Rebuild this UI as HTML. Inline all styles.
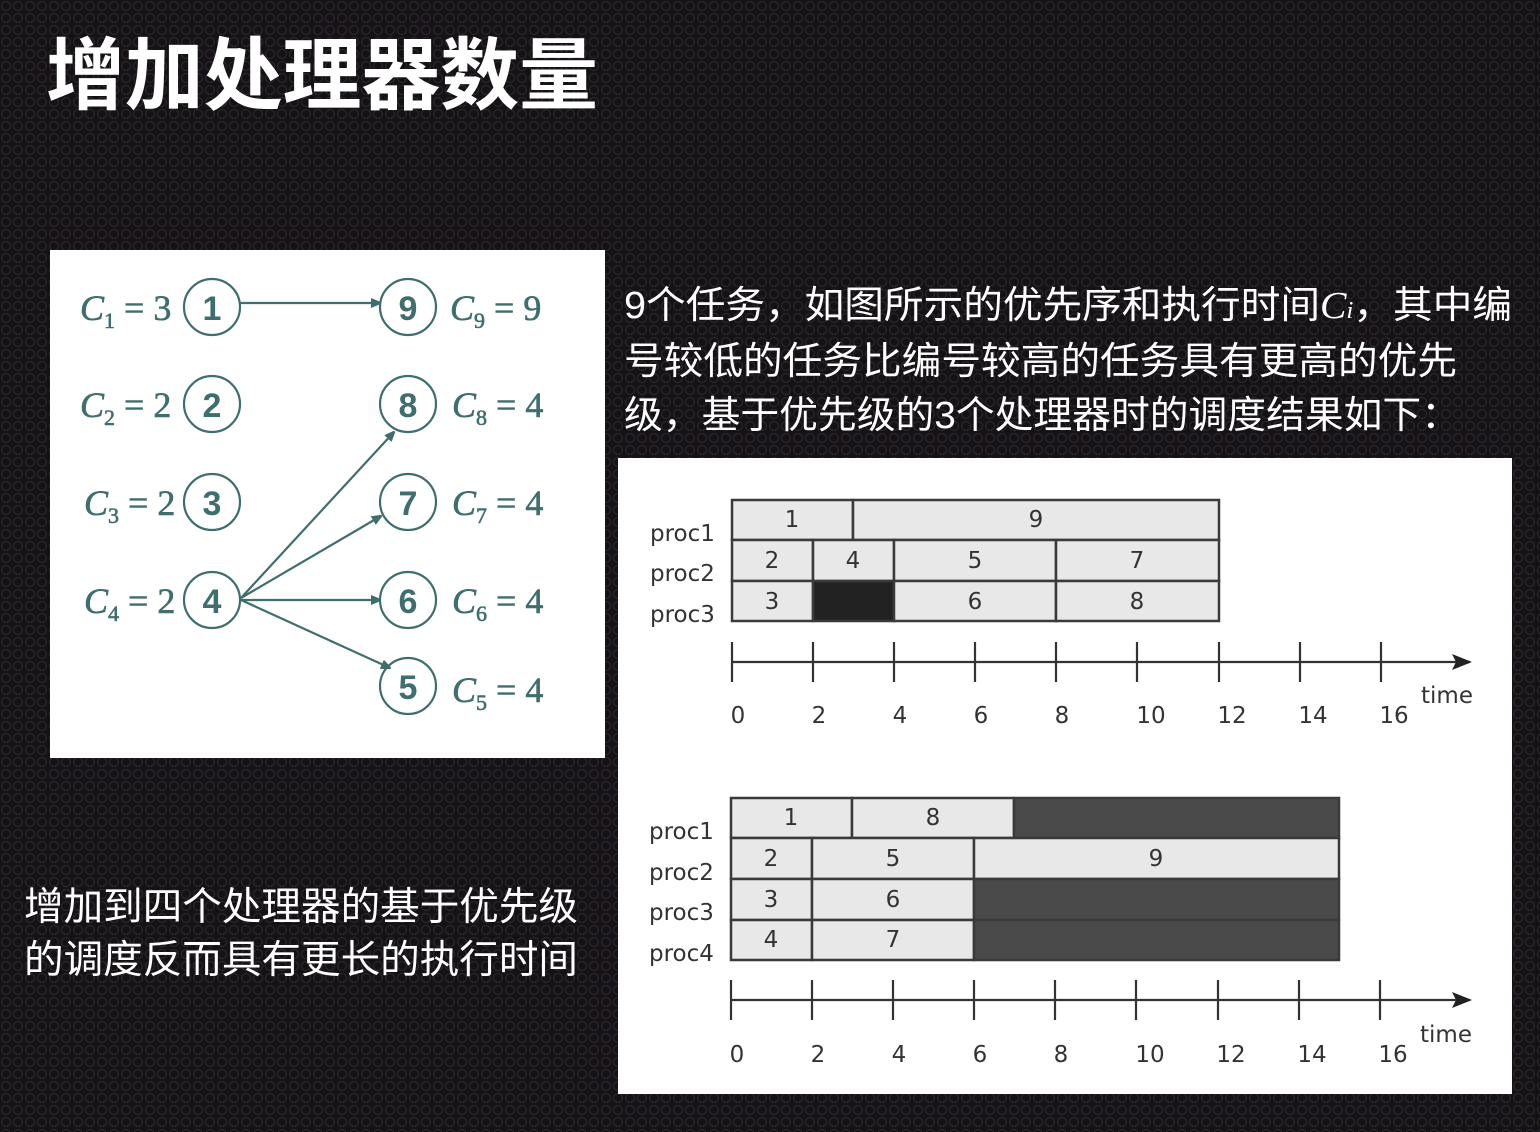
<!DOCTYPE html>
<html><head><meta charset="utf-8"><style>
html,body{margin:0;padding:0;background:#161214;}
svg{display:block}
</style></head><body>
<svg width="1540" height="1132" viewBox="0 0 1540 1132" xmlns="http://www.w3.org/2000/svg">
<defs>
<pattern id="p" width="12" height="12" patternUnits="userSpaceOnUse">
<rect width="12" height="12" fill="#161214"/>
<circle cx="6" cy="6" r="4.5" fill="none" stroke="#262630" stroke-width="1.3"/>
</pattern>
<marker id="ar" markerWidth="10" markerHeight="10" refX="9" refY="5" orient="auto" markerUnits="userSpaceOnUse"><path d="M0,0 L12,5 L0,10 Z" fill="#3f6e6e"/></marker>
<marker id="ak" markerWidth="20" markerHeight="16" refX="18" refY="8" orient="auto" markerUnits="userSpaceOnUse"><path d="M0,0 L20,8 L0,16 L4,8 Z" fill="#222"/></marker>
</defs>
<rect width="1540" height="1132" fill="url(#p)"/>
<g font-family="'Liberation Sans','Noto Sans CJK SC',sans-serif" fill="#fff">
<text x="46" y="103" font-size="79" font-weight="bold" textLength="552" lengthAdjust="spacingAndGlyphs">增加处理器数量</text>
<text font-size="38" x="624" y="318" textLength="888" lengthAdjust="spacingAndGlyphs">9个任务，如图所示的优先序和执行时间<tspan font-family="'Liberation Serif',serif" font-style="italic">C<tspan font-size="24">i</tspan></tspan>，其中编</text>
<text font-size="38" x="624" y="374" textLength="833" lengthAdjust="spacingAndGlyphs">号较低的任务比编号较高的任务具有更高的优先</text>
<text font-size="38" x="624" y="428" textLength="836" lengthAdjust="spacingAndGlyphs">级，基于优先级的3个处理器时的调度结果如下：</text>
<text font-size="39" x="24" y="920" textLength="554" lengthAdjust="spacingAndGlyphs">增加到四个处理器的基于优先级</text>
<text font-size="39" x="24" y="973" textLength="554" lengthAdjust="spacingAndGlyphs">的调度反而具有更长的执行时间</text>
</g>
<rect x="50" y="250" width="555" height="508" fill="#fff"/>
<g stroke="#3f6e6e" stroke-width="2.2" fill="none">
<circle cx="212" cy="307" r="28"/><circle cx="212" cy="404" r="28"/><circle cx="212" cy="502" r="28"/><circle cx="212" cy="600" r="28"/>
<circle cx="408" cy="307" r="28"/><circle cx="408" cy="404" r="28"/><circle cx="408" cy="502" r="28"/><circle cx="408" cy="600" r="28"/><circle cx="408" cy="686" r="28"/>
<line x1="240" y1="303" x2="380" y2="303" marker-end="url(#ar)"/>
<line x1="241" y1="598" x2="394" y2="432" marker-end="url(#ar)"/>
<line x1="241" y1="598" x2="381" y2="516" marker-end="url(#ar)"/>
<line x1="241" y1="600" x2="380" y2="600" marker-end="url(#ar)"/>
<line x1="241" y1="600" x2="390" y2="668" marker-end="url(#ar)"/>
</g>
<g fill="#3f6e6e" font-family="'Liberation Sans',sans-serif" font-size="34" font-weight="bold" text-anchor="middle">
<text x="212" y="320">1</text><text x="212" y="417">2</text><text x="212" y="515">3</text><text x="212" y="613">4</text>
<text x="408" y="320">9</text><text x="408" y="417">8</text><text x="408" y="515">7</text><text x="408" y="613">6</text><text x="408" y="699">5</text>
</g>
<g fill="#3f6e6e" font-family="'Liberation Serif',serif" font-size="36" stroke="#3f6e6e" stroke-width="0.6">
<text x="80" y="320"><tspan font-style="italic">C</tspan><tspan font-size="22" dy="8">1</tspan><tspan dy="-8"> = 3</tspan></text>
<text x="80" y="417"><tspan font-style="italic">C</tspan><tspan font-size="22" dy="8">2</tspan><tspan dy="-8"> = 2</tspan></text>
<text x="84" y="515"><tspan font-style="italic">C</tspan><tspan font-size="22" dy="8">3</tspan><tspan dy="-8"> = 2</tspan></text>
<text x="84" y="613"><tspan font-style="italic">C</tspan><tspan font-size="22" dy="8">4</tspan><tspan dy="-8"> = 2</tspan></text>
<text x="450" y="320"><tspan font-style="italic">C</tspan><tspan font-size="22" dy="8">9</tspan><tspan dy="-8"> = 9</tspan></text>
<text x="452" y="417"><tspan font-style="italic">C</tspan><tspan font-size="22" dy="8">8</tspan><tspan dy="-8"> = 4</tspan></text>
<text x="452" y="515"><tspan font-style="italic">C</tspan><tspan font-size="22" dy="8">7</tspan><tspan dy="-8"> = 4</tspan></text>
<text x="452" y="613"><tspan font-style="italic">C</tspan><tspan font-size="22" dy="8">6</tspan><tspan dy="-8"> = 4</tspan></text>
<text x="452" y="702"><tspan font-style="italic">C</tspan><tspan font-size="22" dy="8">5</tspan><tspan dy="-8"> = 4</tspan></text>
</g>
<rect x="618" y="458" width="894" height="636" fill="#fff"/>
<g stroke="#3a3a3a" stroke-width="2.5" fill="#e8e8e9">
<rect x="732" y="500" width="121" height="40"/><rect x="853" y="500" width="366" height="40"/>
<rect x="732" y="540" width="81" height="41"/><rect x="813" y="540" width="81" height="41"/><rect x="894" y="540" width="162" height="41"/><rect x="1056" y="540" width="163" height="41"/>
<rect x="732" y="581" width="81" height="40"/><rect x="813" y="581" width="81" height="40" fill="#222"/><rect x="894" y="581" width="162" height="40"/><rect x="1056" y="581" width="163" height="40"/>
<rect x="731" y="798" width="121" height="40"/><rect x="852" y="798" width="162" height="40"/><rect x="1014" y="798" width="325" height="40" fill="#4a4a4a"/>
<rect x="731" y="838" width="81" height="41"/><rect x="812" y="838" width="162" height="41"/><rect x="974" y="838" width="365" height="41"/>
<rect x="731" y="879" width="81" height="41"/><rect x="812" y="879" width="162" height="41"/><rect x="974" y="879" width="365" height="41" fill="#4a4a4a"/>
<rect x="731" y="920" width="81" height="40"/><rect x="812" y="920" width="162" height="40"/><rect x="974" y="920" width="365" height="40" fill="#4a4a4a"/>
</g>
<g stroke="#333" stroke-width="2.2">
<line x1="732" y1="662" x2="1470" y2="662" marker-end="url(#ak)"/>
<path d="M732 642V682M813 642V682M894 642V682M975 642V682M1056 642V682M1137 642V682M1219 642V682M1300 642V682M1381 642V682"/>
<line x1="731" y1="1000" x2="1470" y2="1000" marker-end="url(#ak)"/>
<path d="M731 980V1020M812 980V1020M893 980V1020M974 980V1020M1055 980V1020M1136 980V1020M1218 980V1020M1299 980V1020M1380 980V1020"/>
</g>
<g fill="#333" font-family="'DejaVu Sans','Liberation Sans',sans-serif" font-size="23" text-anchor="middle">
<text x="792" y="527">1</text><text x="1036" y="527">9</text>
<text x="772" y="568">2</text><text x="853" y="568">4</text><text x="975" y="568">5</text><text x="1137" y="568">7</text>
<text x="772" y="609">3</text><text x="975" y="609">6</text><text x="1137" y="609">8</text>
<text x="791" y="825">1</text><text x="933" y="825">8</text>
<text x="771" y="866">2</text><text x="893" y="866">5</text><text x="1156" y="866">9</text>
<text x="771" y="907">3</text><text x="893" y="907">6</text>
<text x="771" y="947">4</text><text x="893" y="947">7</text>
<text x="738" y="723">0</text><text x="819" y="723">2</text><text x="900" y="723">4</text><text x="981" y="723">6</text><text x="1062" y="723">8</text><text x="1151" y="723">10</text><text x="1232" y="723">12</text><text x="1313" y="723">14</text><text x="1394" y="723">16</text>
<text x="737" y="1062">0</text><text x="818" y="1062">2</text><text x="899" y="1062">4</text><text x="980" y="1062">6</text><text x="1061" y="1062">8</text><text x="1150" y="1062">10</text><text x="1231" y="1062">12</text><text x="1312" y="1062">14</text><text x="1393" y="1062">16</text>
<text x="1447" y="703">time</text><text x="1446" y="1042">time</text>
</g>
<g fill="#333" font-family="'DejaVu Sans','Liberation Sans',sans-serif" font-size="23">
<text x="650" y="541">proc1</text><text x="650" y="581">proc2</text><text x="650" y="622">proc3</text>
<text x="649" y="839">proc1</text><text x="649" y="880">proc2</text><text x="649" y="920">proc3</text><text x="649" y="961">proc4</text>
</g>
</svg>
</body></html>
